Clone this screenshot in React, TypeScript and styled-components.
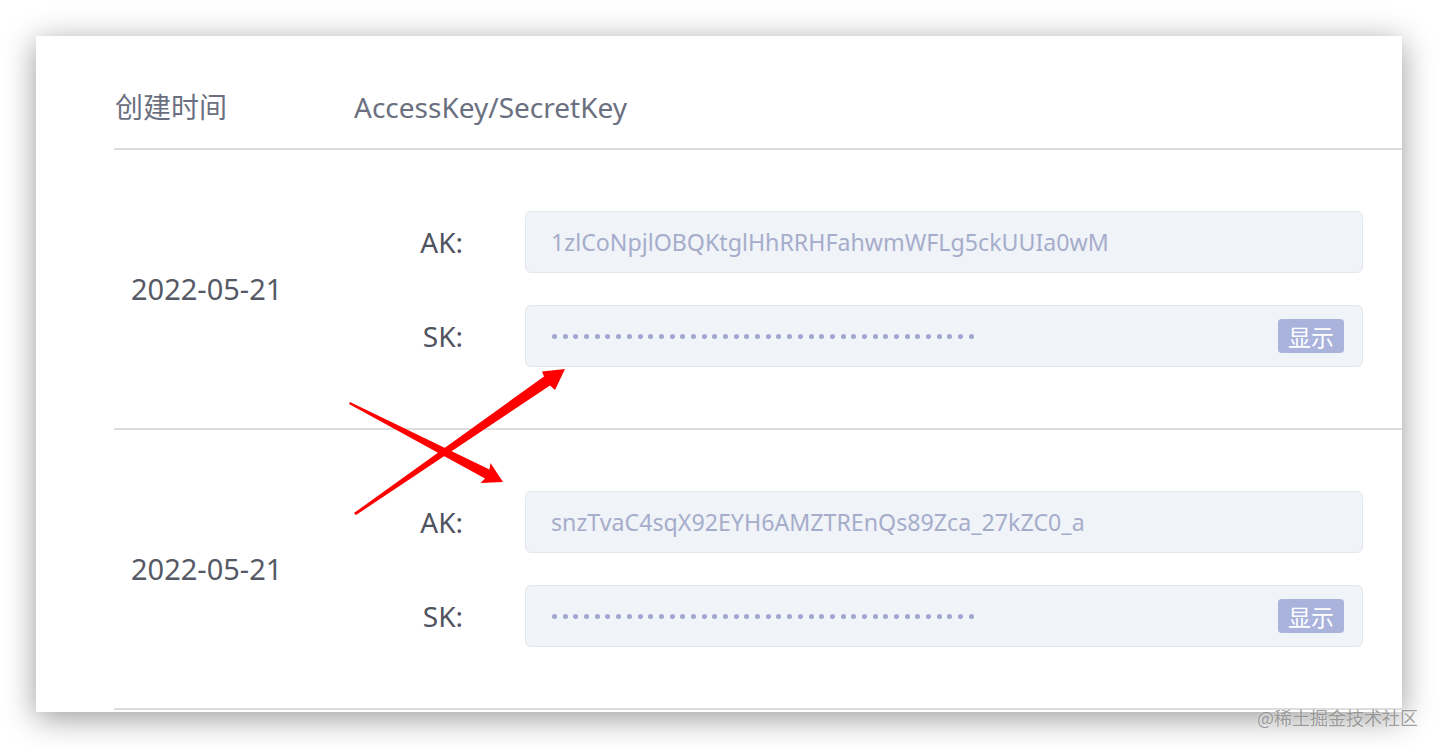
import styled, { createGlobalStyle } from 'styled-components';

const GlobalStyle = createGlobalStyle`
  html, body {
    margin: 0;
    padding: 0;
    background: #ffffff;
  }
  body {
    font-family: 'Noto Sans', 'Noto Sans CJK SC', sans-serif;
  }
`;

const Page = styled.div`
  position: relative;
  width: 1438px;
  height: 748px;
  padding: 36px 0 0 36px;
  box-sizing: border-box;
  overflow: hidden;
`;

const Card = styled.div`
  width: 1366px;
  height: 676px;
  box-sizing: border-box;
  padding-left: 78px;
  background: #ffffff;
  box-shadow: 0 6px 30px rgba(0, 0, 0, 0.4);
  overflow: hidden;
`;

const HeaderRow = styled.div`
  display: grid;
  grid-template-columns: 240px 1fr;
  align-items: center;
  height: 114px;
  box-sizing: border-box;
  padding-top: 51px;
  padding-bottom: 23px;
  border-bottom: 2px solid #dddddd;
`;

const HeadCell = styled.div<{ $offset?: number }>`
  padding-left: ${(p) => p.$offset ?? 0}px;
  font-size: 28px;
  line-height: 40px;
  color: #6b7080;
`;

const KeyRow = styled.div`
  display: grid;
  grid-template-columns: 240px 1fr;
  align-items: center;
  height: 280px;
  box-sizing: border-box;
  border-bottom: 2px solid #dddddd;
`;

const DateCell = styled.div`
  padding-left: 17px;
  font-size: 29px;
  line-height: 40px;
  color: #565a66;
`;

const KeyList = styled.div`
  display: flex;
  flex-direction: column;
  gap: 32px;
  padding-right: 39px;
`;

const Field = styled.div`
  display: grid;
  grid-template-columns: 109px 1fr;
  column-gap: 62px;
  align-items: center;
`;

const Label = styled.div`
  text-align: right;
  font-size: 28px;
  line-height: 40px;
  color: #50545f;
`;

const InputBox = styled.div`
  display: flex;
  align-items: center;
  justify-content: space-between;
  height: 62px;
  box-sizing: border-box;
  padding: 0 18px 0 25px;
  background: #f0f3f8;
  border: 1px solid #e2e6ed;
  border-radius: 6px;
`;

const Value = styled.span`
  font-size: 23.2px;
  color: #a6adcb;
  white-space: nowrap;
`;

const Dots = styled.div`
  display: flex;
  gap: 5.7px;
  padding-left: 1px;
`;

const Dot = styled.span`
  width: 5px;
  height: 5px;
  border-radius: 50%;
  background: #a0a5cf;
`;

const ShowButton = styled.button`
  width: 66px;
  height: 34px;
  padding: 0;
  border: none;
  border-radius: 4px;
  background: #aab3dc;
  color: #ffffff;
  font-family: 'Noto Sans CJK SC', sans-serif;
  font-size: 23px;
  line-height: 34px;
  cursor: pointer;
`;

const Overlay = styled.svg`
  position: absolute;
  left: 0;
  top: 0;
  pointer-events: none;
`;

const Watermark = styled.div`
  position: absolute;
  right: 20px;
  top: 703px;
  font-family: 'Noto Sans CJK SC', sans-serif;
  font-size: 18px;
  line-height: 28px;
  color: rgba(100, 100, 100, 0.6);
  text-shadow: 0 0 2px rgba(255, 255, 255, 0.7);
`;

const keys = [
  { date: '2022-05-21', ak: '1zlCoNpjlOBQKtglHhRRHFahwmWFLg5ckUUIa0wM' },
  { date: '2022-05-21', ak: 'snzTvaC4sqX92EYH6AMZTREnQs89Zca_27kZC0_a' },
];

const dotCount = 40;

export default function App() {
  return (
    <>
      <GlobalStyle />
      <Page>
        <Card>
          <HeaderRow>
            <HeadCell $offset={1}>创建时间</HeadCell>
            <HeadCell>AccessKey/SecretKey</HeadCell>
          </HeaderRow>
          {keys.map((k, i) => (
            <KeyRow key={i}>
              <DateCell>{k.date}</DateCell>
              <KeyList>
                <Field>
                  <Label>AK:</Label>
                  <InputBox>
                    <Value>{k.ak}</Value>
                  </InputBox>
                </Field>
                <Field>
                  <Label>SK:</Label>
                  <InputBox>
                    <Dots>
                      {Array.from({ length: dotCount }).map((_, j) => (
                        <Dot key={j} />
                      ))}
                    </Dots>
                    <ShowButton>显示</ShowButton>
                  </InputBox>
                </Field>
              </KeyList>
            </KeyRow>
          ))}
        </Card>
        <Overlay width="1438" height="748" viewBox="0 0 1438 748">
          {/* arrow pointing up-right at the first SK field */}
          <polygon
            fill="#ff0000"
            points="356,515 550,385.5 555,390 565,369 542,371.5 544,376.5 354,513"
          />
          {/* arrow pointing down-right at the second AK field */}
          <polygon
            fill="#ff0000"
            points="349,404 485,478.5 480.5,483 503,482 490.5,463 489.5,469.5 350,402"
          />
        </Overlay>
        <Watermark>@稀土掘金技术社区</Watermark>
      </Page>
    </>
  );
}
